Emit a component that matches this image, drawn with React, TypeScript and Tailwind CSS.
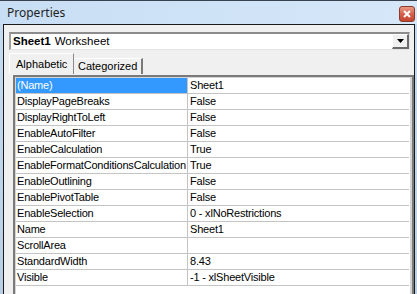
import React from "react";

const ROWS: [string, string][] = [
  ["(Name)", "Sheet1"],
  ["DisplayPageBreaks", "False"],
  ["DisplayRightToLeft", "False"],
  ["EnableAutoFilter", "False"],
  ["EnableCalculation", "True"],
  ["EnableFormatConditionsCalculation", "True"],
  ["EnableOutlining", "False"],
  ["EnablePivotTable", "False"],
  ["EnableSelection", "0 - xlNoRestrictions"],
  ["Name", "Sheet1"],
  ["ScrollArea", ""],
  ["StandardWidth", "8.43"],
  ["Visible", "-1 - xlSheetVisible"],
];

function CloseButton() {
  return (
    <div className="flex h-[16px] w-[16px] items-center justify-center rounded-[3px] border border-[#8a3b2a] bg-gradient-to-b from-[#e99a86] via-[#d5604a] to-[#c4452f]">
      <svg width="8" height="8" viewBox="0 0 8 8">
        <path d="M1 1 L7 7 M7 1 L1 7" stroke="#fff" strokeWidth="2" />
      </svg>
    </div>
  );
}

export default function App() {
  return (
    <div className="flex h-[294px] w-[417px] flex-col overflow-hidden bg-gradient-to-b from-[#c6dcf1] to-[#b9cfe4] font-['Liberation_Sans',Arial,sans-serif] text-[11px] text-black">
      {/* title bar */}
      <div className="flex h-[24px] shrink-0 items-center justify-between border-t border-[#39434f] bg-gradient-to-r from-[#c8def4] via-[#cfe3f7] to-[#d6e7f8] pl-[7px] pr-[2px]">
        <span className="font-['Noto_Sans',sans-serif] text-[12px] leading-none text-[#1e1e1e]">Properties</span>
        <div className="pt-[2px]">
          <CloseButton />
        </div>
      </div>

      {/* window body */}
      <div className="ml-[3px] mr-[2px] flex flex-1 flex-col border-l border-r border-t border-[#1a1a1a] bg-[#f0f0f0] pl-[5px] pt-[7px]">
        {/* object combo */}
        <div className="flex h-[18px] w-[401px] items-stretch border-b border-l-2 border-r border-t-2 border-b-[#e3e3e3] border-l-[#a0a0a0] border-r-[#e3e3e3] border-t-[#8c8c8c] bg-white">
          <div className="flex flex-1 items-center pl-[2px] text-[11.5px] leading-none">
            <span className="font-bold">Sheet1</span>
            <span className="ml-[4px]">Worksheet</span>
          </div>
          <div className="flex w-[17px] items-center justify-center border-b-2 border-l border-r-2 border-t border-b-[#6b6b6b] border-l-white border-r-[#6b6b6b] border-t-white bg-[#f0f0f0]">
            <svg width="7" height="4" viewBox="0 0 7 4">
              <path d="M0 0 H7 L3.5 4 Z" fill="#000" />
            </svg>
          </div>
        </div>

        {/* tabs */}
        <div className="mt-[3px] flex h-[21px] items-end">
          <div className="flex h-[21px] w-[65px] items-center border-l border-r border-t border-l-white border-r-[#8a8a8a] border-t-white pl-[6px] pt-[1px]">
            Alphabetic
          </div>
          <div className="flex h-[16px] w-[69px] items-center border-r-2 border-t border-r-[#7a7a7a] border-t-white pl-[4px]">
            Categorized
          </div>
        </div>

        {/* property grid */}
        <div className="ml-[4px] mt-px flex-1 border-l-2 border-r-2 border-t-2 border-l-[#7a7a7a] border-r-[#7a7a7a] border-t-[#7a7a7a]">
          <div className="h-full border-l border-r-2 border-t border-l-[#d4d4d4] border-r-[#d4d4d4] border-t-[#d4d4d4] bg-white pr-px tracking-[-0.2px]">
            {ROWS.map(([name, value], i) => (
              <div key={name} className="flex h-[16px] border-b border-[#c4c4c4]">
                <div
                  className={`flex w-[172px] shrink-0 items-center overflow-hidden whitespace-nowrap border-r border-[#c4c4c4] pl-[1px] ${
                    i === 0 ? "bg-[#3399ff] text-white" : ""
                  }`}
                >
                  {name}
                </div>
                <div className="flex flex-1 items-center pl-[2px]">{value}</div>
              </div>
            ))}
          </div>
        </div>
      </div>
    </div>
  );
}
